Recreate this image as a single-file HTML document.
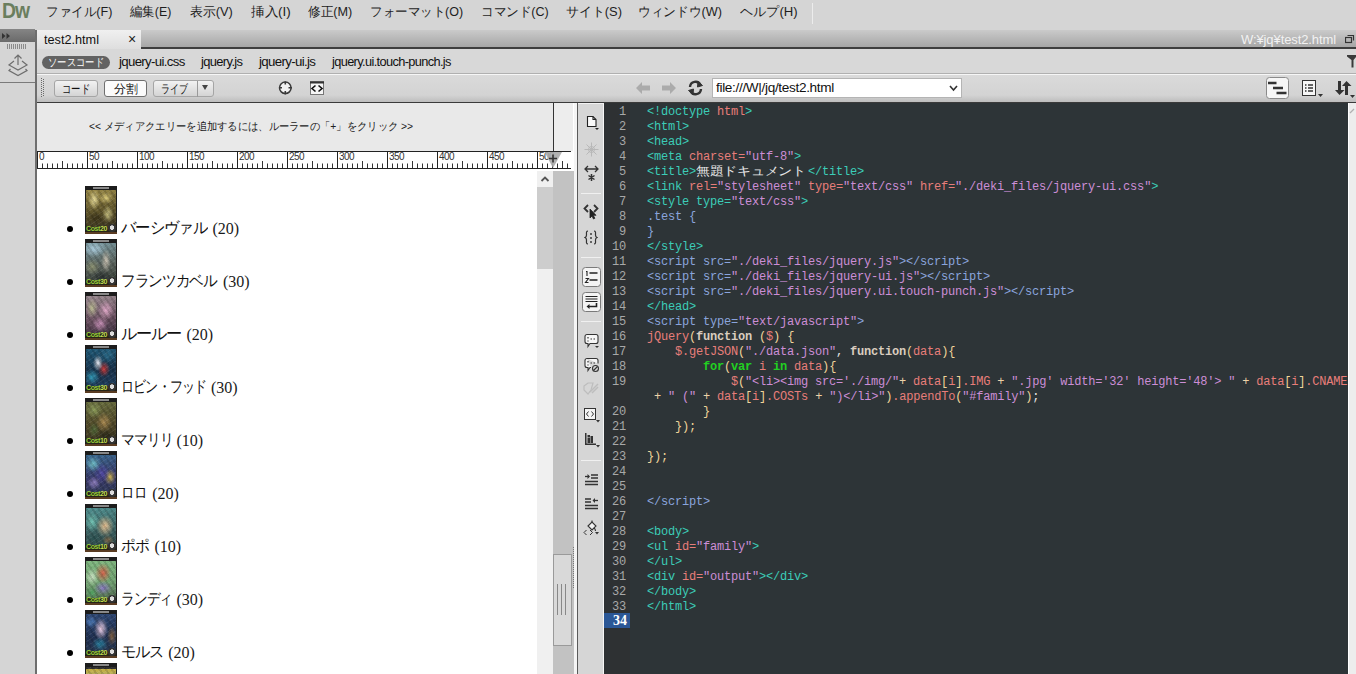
<!DOCTYPE html>
<html><head><meta charset="utf-8">
<style>
*{margin:0;padding:0;box-sizing:border-box}
html,body{width:1356px;height:674px;overflow:hidden;background:#d6d6d6;font-family:"Liberation Sans",sans-serif;position:relative}
.a{position:absolute}
#menu{left:0;top:0;width:1356px;height:30px;background:#d5d5d5}
#menu .m{position:absolute;top:3px;font-size:13px;color:#1e1e1e;white-space:nowrap}
#logo{left:2px;top:-2px;font-size:22px;font-weight:bold;color:#6a7e5e;letter-spacing:-1px;transform:scaleX(0.88);transform-origin:0 0}
#msep{left:812px;top:3px;width:1px;height:21px;background:#bdbdbd;border-right:1px solid #ececec}
#lp{left:0;top:30px;width:37px;height:645px;background:#d5d5d5;border-right:2px solid #6e6e6e}
#lptop{left:0;top:29px;width:35px;height:13px;background:linear-gradient(#858585,#6a6a6a)}
#lpsep{left:0;top:82px;width:35px;height:1px;background:#7a7a7a}
#tabbar{left:37px;top:30px;width:1319px;height:19px;background:linear-gradient(#cacaca,#a6a6a6);border-bottom:2px solid #3e3e3e}
#tab{left:37px;top:30px;width:104px;height:19px;background:linear-gradient(#f0f0f0,#dedede);font-size:12px;color:#111;padding:3px 0 0 7px}
#tabx{left:128px;top:31px;font-size:14px;color:#222}
#path{left:1241px;top:33px;font-size:12px;color:#f2f2f2;letter-spacing:-0.1px}
#rel{left:37px;top:49px;width:1319px;height:26px;background:#d8d8d8;border-bottom:1px solid #f6f6f6;box-shadow:inset 0 -1px 0 #b0b0b0}
#rel .r{position:absolute;top:6px;font-size:12px;color:#111;white-space:nowrap;letter-spacing:-0.6px}
#pill{white-space:nowrap;overflow:hidden;left:42px;top:56px;width:68px;height:13px;border-radius:7px;background:#626262;color:#fff;font-size:11px;text-align:left;padding-left:6px;line-height:13px}
#tool{left:37px;top:75px;width:1319px;height:28px;background:linear-gradient(#dadada,#d3d3d3 75%,#bdbdbd);border-bottom:1px solid #3a3a3a}
.btn{white-space:nowrap;overflow:hidden;position:absolute;top:80px;height:17px;border:1px solid #a5a5a5;border-radius:3px;background:linear-gradient(#f2f2f2,#d4d4d4);font-size:12px;color:#111;text-align:center;line-height:16px}
#addr{left:712px;top:78px;width:250px;height:20px;background:#fff;border:1px solid #b4b4b4;font-size:12px;color:#111;padding:2px 0 0 3px;letter-spacing:-0.3px}
#design{left:37px;top:103px;width:540px;height:571px;background:#fff}
#mq{left:37px;top:103px;width:517px;height:48px;background:#e9e9e9;border-right:1px solid #333;font-size:11px;color:#222;padding:16px 0 0 52px}
#vstrip{left:554px;top:103px;width:19px;height:48px;background:#ededed}
#sbtrack{left:537px;top:171px;width:16px;height:503px;background:#f0f0f0}
#sbup{left:537px;top:171px;width:16px;height:16px;background:#ececec;color:#444;font-size:11px;text-align:center;line-height:18px}
#sbthumb{left:537px;top:187px;width:16px;height:82px;background:#cdcdcd}
#split{left:553px;top:171px;width:21px;height:503px;background:#c2c2c2}
#splith{left:553px;top:554px;width:19px;height:92px;background:#d9d9d9;border:1px solid #9a9a9a}
#splitl{left:557px;top:584px;width:9px;height:31px;border-left:1px solid #888;border-right:1px solid #888}
#splitl:after{content:"";position:absolute;left:3px;top:0;width:1px;height:31px;background:#888}
#wline{left:574px;top:103px;width:3px;height:571px;background:#f4f4f4}
#dline{left:577px;top:103px;width:1px;height:571px;background:#5a5a5a}
#sidetb{left:578px;top:103px;width:26px;height:571px;background:#d6d6d6;border-top:1px solid #f2f2f2;border-right:1px solid #f6f6f6}
.ssep{position:absolute;left:581px;width:20px;height:1px;background:#b9b9b9;border-bottom:1px solid #f0f0f0}
#gutter{left:604px;top:103px;width:26px;height:571px;background:#2e3133}
#code{left:630px;top:103px;width:718px;height:571px;background:#2d3437}
#redge{left:1348px;top:103px;width:8px;height:571px;background:#ededed}
#gut{left:604px;top:105px;width:22px;text-align:right;font-family:"Liberation Mono",monospace;font-size:12px;color:#a8a8a8;line-height:15px;white-space:pre;letter-spacing:-0.2px}
#ln34{left:604px;top:613px;width:26px;height:15px;background:#2b5796;color:#fff;font-weight:bold;font-family:"Liberation Serif",serif;font-size:14px;text-align:right;padding-right:3px;line-height:15px}
#src{left:647px;top:105px;font-family:"Liberation Mono",monospace;font-size:12px;line-height:15px;white-space:pre;letter-spacing:-0.2px;color:#ccc}
.t{color:#3ccdb8}.at{color:#e87e7a}.v{color:#cc8ed6}.s{color:#8aa4dc}.k{color:#22d022;font-weight:bold}.p{color:#f0d49a}.fn{color:#dacdbf;font-weight:bold}.w{color:#e6e6e6}.op{color:#ecd2a8}.ttl{display:inline-block;width:112px;vertical-align:top;height:15px;overflow:visible}
.card{left:85px;width:32px;height:48px;background:#5a3c22;overflow:hidden}
.card:before{content:"";position:absolute;left:0;top:0;width:32px;height:46px;background:#1c1c1c}
.card .art{position:absolute;left:1px;top:4px;width:30px;height:37px}
.card .art:after{content:"";position:absolute;left:0;top:0;width:30px;height:37px;background:repeating-linear-gradient(55deg,rgba(0,0,0,.13) 0 2px,transparent 2px 5px),repeating-linear-gradient(-35deg,rgba(255,255,255,.07) 0 1px,transparent 1px 4px)}
.card .ctop{position:absolute;left:8px;top:1px;width:16px;height:2px;background:#888}
.card .cbot{position:absolute;left:1px;top:41px;width:30px;height:5px;background:#262418}
.card .cbot span{position:absolute;left:0px;top:-2px;font-size:7px;color:#9acd3c;font-weight:bold;letter-spacing:-0.4px;line-height:8px}
.card .cbot b{position:absolute;left:14px;top:-2px;font-size:7px;color:#c0de50;letter-spacing:-0.3px;line-height:8px}
.card .cbot i{position:absolute;right:0px;top:-3px;width:8px;height:8px;border-radius:4px;background:radial-gradient(circle at 50% 45%,#ddd 0 2px,#333 2.5px)}
.bul{left:67px;width:6px;height:6px;border-radius:50%;background:#000}
.lt{font-family:"Liberation Serif",serif;font-size:16px;color:#1a1a1a;white-space:nowrap;line-height:18px}
.jn{left:121px;font-family:"Liberation Sans",sans-serif;font-size:16px;line-height:18px;color:#111;white-space:nowrap;letter-spacing:-1px}
.ico{position:absolute}
</style></head><body>
<div id="menu" class="a">
<div id="logo" class="a">Dw</div>
<span class="m fit" style="left:46px;--w:66.4">ファイル(F)</span>
<span class="m fit" style="left:130px;--w:41.3">編集(E)</span>
<span class="m fit" style="left:190px;--w:42.8">表示(V)</span>
<span class="m fit" style="left:251px;--w:39.8">挿入(I)</span>
<span class="m fit" style="left:308px;--w:44.3">修正(M)</span>
<span class="m fit" style="left:370px;--w:93.2">フォーマット(O)</span>
<span class="m fit" style="left:481px;--w:67.8">コマンド(C)</span>
<span class="m fit" style="left:566px;--w:56">サイト(S)</span>
<span class="m fit" style="left:638px;--w:84.1">ウィンドウ(W)</span>
<span class="m fit" style="left:740px;--w:57.6">ヘルプ(H)</span>
<div id="msep" class="a"></div>
</div>
<div id="lp" class="a"></div>
<div id="lptop" class="a"></div>
<svg class="a" style="left:2px;top:33px" width="9" height="6"><path d="M0 0L3.5 3L0 6ZM4.5 0L8 3L4.5 6Z" fill="#333"/></svg>
<svg class="a" style="left:7px;top:44px" width="20" height="6"><path d="M0.5 0v5M2.5 0v5M4.5 0v5M6.5 0v5M8.5 0v5M10.5 0v5M12.5 0v5M14.5 0v5M16.5 0v5M18.5 0v5" stroke="#8a8a8a"/></svg>
<svg class="a" style="left:7px;top:53px" width="22" height="25" fill="none" stroke="#6e6e6e" stroke-width="1.2"><path d="M11 2v10M7.5 5.5L11 2l3.5 3.5"/><path d="M7 8L2 12l9 5 9-5-5-4"/><path d="M3.5 16L2 17.5l9 5 9-5-1.5-1.5"/></svg>
<div id="lpsep" class="a"></div>
<div id="tabbar" class="a"></div>
<div id="tab" class="a"><span class="fit" style="display:inline-block;--w:55">test2.html</span></div>
<div id="tabx" class="a">×</div>
<div id="path" class="a fit" style="--w:95">W:¥jq¥test2.html</div>
<svg class="a" style="left:1345px;top:34px" width="10" height="10" fill="none" stroke="#333" stroke-width="1.2"><rect x="0.5" y="3.5" width="6" height="5"/><path d="M2.5 1.5h6v5"/></svg>
<div id="rel" class="a">
<span class="r fit" style="left:82px;--w:65.6">jquery-ui.css</span>
<span class="r fit" style="left:164px;--w:41.4">jquery.js</span>
<span class="r fit" style="left:222px;--w:56.2">jquery-ui.js</span>
<span class="r fit" style="left:295px;--w:118.8">jquery.ui.touch-punch.js</span>
</div>
<div id="pill" class="a"><span class="fit" style="display:inline-block;--w:56">ソースコード</span></div>
<svg class="a" style="left:1347px;top:55px" width="9" height="13"><path d="M0 0h9v2L6.5 5V12.5H4.5V5L0 1.5Z" fill="#3a3a3a"/></svg>
<div id="tool" class="a"></div>
<svg class="a" style="left:40px;top:78px" width="5" height="19"><path d="M1.5 0v19M3.5 1v18" stroke="#6a6a6a" stroke-dasharray="1 1"/></svg>
<div class="btn" style="left:54px;width:44px;text-align:left;padding-left:7px"><span class="fit" style="display:inline-block;--w:28">コード</span></div>
<div class="btn" style="left:104px;width:43px;background:#fbfbfb;border-color:#6f6f6f">分割</div>
<div class="btn" style="left:153px;width:61px;text-align:left;padding-left:7px"><span class="fit" style="display:inline-block;--w:27">ライブ</span></div>
<div class="a" style="left:197px;top:81px;width:1px;height:16px;background:#9a9a9a"></div>
<svg class="a" style="left:202px;top:85px" width="7" height="5"><path d="M0 0h6L3 5Z" fill="#444"/></svg>
<svg class="a" style="left:278px;top:81px" width="15" height="14"><circle cx="7.3" cy="6.8" r="5.8" fill="#f2f2f2" stroke="#3a3a3a" stroke-width="1.5"/><path d="M7.3 0.5v3M7.3 10v3.5M1 6.8h3M10.5 6.8h3.5" stroke="#3a3a3a" stroke-width="1.6"/></svg>
<svg class="a" style="left:310px;top:81px" width="14" height="14"><rect x="0.5" y="0.5" width="13" height="13" fill="#f6f6f6" stroke="#777"/><path d="M0 1.5h14" stroke="#333" stroke-width="2"/><path d="M5.5 4.5L2 7.5 5.5 10.5M8.5 4.5l3.5 3-3.5 3" stroke="#111" fill="none" stroke-width="1.6"/></svg>
<svg class="a" style="left:636px;top:82px" width="14" height="12"><path d="M0 6L6 0v3.5h8v5H6V12Z" fill="#ababab"/></svg>
<svg class="a" style="left:662px;top:82px" width="14" height="12"><path d="M14 6L8 0v3.5H0v5h8V12Z" fill="#ababab"/></svg>
<svg class="a" style="left:687px;top:80px" width="17" height="16" fill="none" stroke="#333" stroke-width="2.4"><path d="M3 7A5.5 5.5 0 0 1 13.5 5"/><path d="M14 9A5.5 5.5 0 0 1 3.5 11"/><path d="M11 1.5L15.5 5.5 10.5 7Z" fill="#333" stroke-width="1"/><path d="M6 14.5L1.5 10.5 6.5 9Z" fill="#333" stroke-width="1"/></svg>
<div id="addr" class="a"><span class="fit" style="display:inline-block;--w:118">file:///W|/jq/test2.html</span></div>
<svg class="a" style="left:949px;top:85px" width="9" height="7"><path d="M1 1L4.5 5 8 1" stroke="#333" stroke-width="1.6" fill="none"/></svg>
<svg class="a" style="left:1266px;top:77px" width="23" height="22"><rect x="0.5" y="0.5" width="22" height="21" rx="3" fill="#f6f6f6" stroke="#8a8a8a"/><path d="M2 6h8.5M7 11h10M10.5 16h10" stroke="#333" stroke-width="2.6"/></svg>
<svg class="a" style="left:1302px;top:80px" width="22" height="17"><rect x="0.5" y="0.5" width="13" height="15" fill="#f6f6f6" stroke="#333"/><path d="M3 5h1.5M6 5h5M3 8h1.5M6 8h5M3 11h1.5M6 11h5" stroke="#333" stroke-width="1.6"/><path d="M16 14h5l-2.5 3Z" fill="#333"/></svg>
<svg class="a" style="left:1334px;top:80px" width="22" height="18" fill="#333"><path d="M4 1h3v9h3.5L5.5 15 1 10h3Z"/><path d="M11 15h3V6h3.5L12.5 1 8 6h3Z"/><path d="M16 15h5l-2.5 3Z"/></svg>
<div id="design" class="a"></div>
<div id="mq" class="a"><span class="fit" style="display:inline-block;--w:324">&lt;&lt; メディアクエリーを追加するには、ルーラーの「+」をクリック &gt;&gt;</span></div>
<div id="vstrip" class="a"></div>
<svg class="a" style="left:0;top:151px" width="575" height="18"><line x1="37.5" y1="0" x2="37.5" y2="17" stroke="#222" stroke-width="1"/><text x="39.0" y="9" font-size="10" fill="#333" font-family="Liberation Sans" letter-spacing="-0.5">0</text><line x1="42.5" y1="12.5" x2="42.5" y2="17" stroke="#333" stroke-width="1"/><line x1="47.5" y1="12.5" x2="47.5" y2="17" stroke="#333" stroke-width="1"/><line x1="52.5" y1="12.5" x2="52.5" y2="17" stroke="#333" stroke-width="1"/><line x1="57.5" y1="12.5" x2="57.5" y2="17" stroke="#333" stroke-width="1"/><line x1="62.5" y1="10" x2="62.5" y2="17" stroke="#333" stroke-width="1"/><line x1="67.5" y1="12.5" x2="67.5" y2="17" stroke="#333" stroke-width="1"/><line x1="72.5" y1="12.5" x2="72.5" y2="17" stroke="#333" stroke-width="1"/><line x1="77.5" y1="12.5" x2="77.5" y2="17" stroke="#333" stroke-width="1"/><line x1="82.5" y1="12.5" x2="82.5" y2="17" stroke="#333" stroke-width="1"/><line x1="87.5" y1="0" x2="87.5" y2="17" stroke="#222" stroke-width="1"/><text x="89.0" y="9" font-size="10" fill="#333" font-family="Liberation Sans" letter-spacing="-0.5">50</text><line x1="92.5" y1="12.5" x2="92.5" y2="17" stroke="#333" stroke-width="1"/><line x1="97.5" y1="12.5" x2="97.5" y2="17" stroke="#333" stroke-width="1"/><line x1="102.5" y1="12.5" x2="102.5" y2="17" stroke="#333" stroke-width="1"/><line x1="107.5" y1="12.5" x2="107.5" y2="17" stroke="#333" stroke-width="1"/><line x1="112.5" y1="10" x2="112.5" y2="17" stroke="#333" stroke-width="1"/><line x1="117.5" y1="12.5" x2="117.5" y2="17" stroke="#333" stroke-width="1"/><line x1="122.5" y1="12.5" x2="122.5" y2="17" stroke="#333" stroke-width="1"/><line x1="127.5" y1="12.5" x2="127.5" y2="17" stroke="#333" stroke-width="1"/><line x1="132.5" y1="12.5" x2="132.5" y2="17" stroke="#333" stroke-width="1"/><line x1="137.5" y1="0" x2="137.5" y2="17" stroke="#222" stroke-width="1"/><text x="139.0" y="9" font-size="10" fill="#333" font-family="Liberation Sans" letter-spacing="-0.5">100</text><line x1="142.5" y1="12.5" x2="142.5" y2="17" stroke="#333" stroke-width="1"/><line x1="147.5" y1="12.5" x2="147.5" y2="17" stroke="#333" stroke-width="1"/><line x1="152.5" y1="12.5" x2="152.5" y2="17" stroke="#333" stroke-width="1"/><line x1="157.5" y1="12.5" x2="157.5" y2="17" stroke="#333" stroke-width="1"/><line x1="162.5" y1="10" x2="162.5" y2="17" stroke="#333" stroke-width="1"/><line x1="167.5" y1="12.5" x2="167.5" y2="17" stroke="#333" stroke-width="1"/><line x1="172.5" y1="12.5" x2="172.5" y2="17" stroke="#333" stroke-width="1"/><line x1="177.5" y1="12.5" x2="177.5" y2="17" stroke="#333" stroke-width="1"/><line x1="182.5" y1="12.5" x2="182.5" y2="17" stroke="#333" stroke-width="1"/><line x1="187.5" y1="0" x2="187.5" y2="17" stroke="#222" stroke-width="1"/><text x="189.0" y="9" font-size="10" fill="#333" font-family="Liberation Sans" letter-spacing="-0.5">150</text><line x1="192.5" y1="12.5" x2="192.5" y2="17" stroke="#333" stroke-width="1"/><line x1="197.5" y1="12.5" x2="197.5" y2="17" stroke="#333" stroke-width="1"/><line x1="202.5" y1="12.5" x2="202.5" y2="17" stroke="#333" stroke-width="1"/><line x1="207.5" y1="12.5" x2="207.5" y2="17" stroke="#333" stroke-width="1"/><line x1="212.5" y1="10" x2="212.5" y2="17" stroke="#333" stroke-width="1"/><line x1="217.5" y1="12.5" x2="217.5" y2="17" stroke="#333" stroke-width="1"/><line x1="222.5" y1="12.5" x2="222.5" y2="17" stroke="#333" stroke-width="1"/><line x1="227.5" y1="12.5" x2="227.5" y2="17" stroke="#333" stroke-width="1"/><line x1="232.5" y1="12.5" x2="232.5" y2="17" stroke="#333" stroke-width="1"/><line x1="237.5" y1="0" x2="237.5" y2="17" stroke="#222" stroke-width="1"/><text x="239.0" y="9" font-size="10" fill="#333" font-family="Liberation Sans" letter-spacing="-0.5">200</text><line x1="242.5" y1="12.5" x2="242.5" y2="17" stroke="#333" stroke-width="1"/><line x1="247.5" y1="12.5" x2="247.5" y2="17" stroke="#333" stroke-width="1"/><line x1="252.5" y1="12.5" x2="252.5" y2="17" stroke="#333" stroke-width="1"/><line x1="257.5" y1="12.5" x2="257.5" y2="17" stroke="#333" stroke-width="1"/><line x1="262.5" y1="10" x2="262.5" y2="17" stroke="#333" stroke-width="1"/><line x1="267.5" y1="12.5" x2="267.5" y2="17" stroke="#333" stroke-width="1"/><line x1="272.5" y1="12.5" x2="272.5" y2="17" stroke="#333" stroke-width="1"/><line x1="277.5" y1="12.5" x2="277.5" y2="17" stroke="#333" stroke-width="1"/><line x1="282.5" y1="12.5" x2="282.5" y2="17" stroke="#333" stroke-width="1"/><line x1="287.5" y1="0" x2="287.5" y2="17" stroke="#222" stroke-width="1"/><text x="289.0" y="9" font-size="10" fill="#333" font-family="Liberation Sans" letter-spacing="-0.5">250</text><line x1="292.5" y1="12.5" x2="292.5" y2="17" stroke="#333" stroke-width="1"/><line x1="297.5" y1="12.5" x2="297.5" y2="17" stroke="#333" stroke-width="1"/><line x1="302.5" y1="12.5" x2="302.5" y2="17" stroke="#333" stroke-width="1"/><line x1="307.5" y1="12.5" x2="307.5" y2="17" stroke="#333" stroke-width="1"/><line x1="312.5" y1="10" x2="312.5" y2="17" stroke="#333" stroke-width="1"/><line x1="317.5" y1="12.5" x2="317.5" y2="17" stroke="#333" stroke-width="1"/><line x1="322.5" y1="12.5" x2="322.5" y2="17" stroke="#333" stroke-width="1"/><line x1="327.5" y1="12.5" x2="327.5" y2="17" stroke="#333" stroke-width="1"/><line x1="332.5" y1="12.5" x2="332.5" y2="17" stroke="#333" stroke-width="1"/><line x1="337.5" y1="0" x2="337.5" y2="17" stroke="#222" stroke-width="1"/><text x="339.0" y="9" font-size="10" fill="#333" font-family="Liberation Sans" letter-spacing="-0.5">300</text><line x1="342.5" y1="12.5" x2="342.5" y2="17" stroke="#333" stroke-width="1"/><line x1="347.5" y1="12.5" x2="347.5" y2="17" stroke="#333" stroke-width="1"/><line x1="352.5" y1="12.5" x2="352.5" y2="17" stroke="#333" stroke-width="1"/><line x1="357.5" y1="12.5" x2="357.5" y2="17" stroke="#333" stroke-width="1"/><line x1="362.5" y1="10" x2="362.5" y2="17" stroke="#333" stroke-width="1"/><line x1="367.5" y1="12.5" x2="367.5" y2="17" stroke="#333" stroke-width="1"/><line x1="372.5" y1="12.5" x2="372.5" y2="17" stroke="#333" stroke-width="1"/><line x1="377.5" y1="12.5" x2="377.5" y2="17" stroke="#333" stroke-width="1"/><line x1="382.5" y1="12.5" x2="382.5" y2="17" stroke="#333" stroke-width="1"/><line x1="387.5" y1="0" x2="387.5" y2="17" stroke="#222" stroke-width="1"/><text x="389.0" y="9" font-size="10" fill="#333" font-family="Liberation Sans" letter-spacing="-0.5">350</text><line x1="392.5" y1="12.5" x2="392.5" y2="17" stroke="#333" stroke-width="1"/><line x1="397.5" y1="12.5" x2="397.5" y2="17" stroke="#333" stroke-width="1"/><line x1="402.5" y1="12.5" x2="402.5" y2="17" stroke="#333" stroke-width="1"/><line x1="407.5" y1="12.5" x2="407.5" y2="17" stroke="#333" stroke-width="1"/><line x1="412.5" y1="10" x2="412.5" y2="17" stroke="#333" stroke-width="1"/><line x1="417.5" y1="12.5" x2="417.5" y2="17" stroke="#333" stroke-width="1"/><line x1="422.5" y1="12.5" x2="422.5" y2="17" stroke="#333" stroke-width="1"/><line x1="427.5" y1="12.5" x2="427.5" y2="17" stroke="#333" stroke-width="1"/><line x1="432.5" y1="12.5" x2="432.5" y2="17" stroke="#333" stroke-width="1"/><line x1="437.5" y1="0" x2="437.5" y2="17" stroke="#222" stroke-width="1"/><text x="439.0" y="9" font-size="10" fill="#333" font-family="Liberation Sans" letter-spacing="-0.5">400</text><line x1="442.5" y1="12.5" x2="442.5" y2="17" stroke="#333" stroke-width="1"/><line x1="447.5" y1="12.5" x2="447.5" y2="17" stroke="#333" stroke-width="1"/><line x1="452.5" y1="12.5" x2="452.5" y2="17" stroke="#333" stroke-width="1"/><line x1="457.5" y1="12.5" x2="457.5" y2="17" stroke="#333" stroke-width="1"/><line x1="462.5" y1="10" x2="462.5" y2="17" stroke="#333" stroke-width="1"/><line x1="467.5" y1="12.5" x2="467.5" y2="17" stroke="#333" stroke-width="1"/><line x1="472.5" y1="12.5" x2="472.5" y2="17" stroke="#333" stroke-width="1"/><line x1="477.5" y1="12.5" x2="477.5" y2="17" stroke="#333" stroke-width="1"/><line x1="482.5" y1="12.5" x2="482.5" y2="17" stroke="#333" stroke-width="1"/><line x1="487.5" y1="0" x2="487.5" y2="17" stroke="#222" stroke-width="1"/><text x="489.0" y="9" font-size="10" fill="#333" font-family="Liberation Sans" letter-spacing="-0.5">450</text><line x1="492.5" y1="12.5" x2="492.5" y2="17" stroke="#333" stroke-width="1"/><line x1="497.5" y1="12.5" x2="497.5" y2="17" stroke="#333" stroke-width="1"/><line x1="502.5" y1="12.5" x2="502.5" y2="17" stroke="#333" stroke-width="1"/><line x1="507.5" y1="12.5" x2="507.5" y2="17" stroke="#333" stroke-width="1"/><line x1="512.5" y1="10" x2="512.5" y2="17" stroke="#333" stroke-width="1"/><line x1="517.5" y1="12.5" x2="517.5" y2="17" stroke="#333" stroke-width="1"/><line x1="522.5" y1="12.5" x2="522.5" y2="17" stroke="#333" stroke-width="1"/><line x1="527.5" y1="12.5" x2="527.5" y2="17" stroke="#333" stroke-width="1"/><line x1="532.5" y1="12.5" x2="532.5" y2="17" stroke="#333" stroke-width="1"/><line x1="537.5" y1="0" x2="537.5" y2="17" stroke="#222" stroke-width="1"/><text x="539.0" y="9" font-size="10" fill="#333" font-family="Liberation Sans" letter-spacing="-0.5">500</text><line x1="542.5" y1="12.5" x2="542.5" y2="17" stroke="#333" stroke-width="1"/><line x1="547.5" y1="12.5" x2="547.5" y2="17" stroke="#333" stroke-width="1"/><line x1="552.5" y1="12.5" x2="552.5" y2="17" stroke="#333" stroke-width="1"/><line x1="557.5" y1="12.5" x2="557.5" y2="17" stroke="#333" stroke-width="1"/><line x1="562.5" y1="10" x2="562.5" y2="17" stroke="#333" stroke-width="1"/><line x1="567.5" y1="12.5" x2="567.5" y2="17" stroke="#333" stroke-width="1"/><line x1="37" y1="0.5" x2="571" y2="0.5" stroke="#222"/><line x1="37" y1="17.5" x2="571" y2="17.5" stroke="#222"/><path d="M544.5 1 L562 1 L553 17 Z" fill="#a9a9a9" opacity="0.9"/><path d="M549 7.5h8M553 3.5v8" stroke="#333" stroke-width="1.6"/></svg>
<div id="sbtrack" class="a"></div>
<div id="sbthumb" class="a"></div>
<svg class="a" style="left:537px;top:171px" width="16" height="16"><path d="M4.5 10L8 6.5 11.5 10" stroke="#555" stroke-width="1.8" fill="none"/></svg>
<div id="split" class="a"></div>
<div id="splith" class="a"></div>
<div id="splitl" class="a"></div>
<div id="wline" class="a"></div>
<div id="dline" class="a"></div>
<svg class="a" style="left:573px;top:547px" width="2" height="42"><path d="M0.5 0v42" stroke="#777" stroke-dasharray="1 1"/></svg>

<div class="card a" style="top:186px"><div class="art" style="background:radial-gradient(ellipse 6px 10px at 8px 10px,#e8dc98,transparent),radial-gradient(ellipse 7px 6px at 20px 8px,#d8c878,transparent),radial-gradient(ellipse 6px 9px at 22px 24px,#c8c080,transparent),radial-gradient(ellipse 8px 6px at 10px 28px,#3a3218,transparent),linear-gradient(170deg,#9a8a48,#5a5028 60%,#3a3420)"></div><div class="ctop"></div><div class="cbot"><span>Cost</span><b>20</b><i></i></div></div>
<div class="bul a" style="top:226px"></div>
<div class="jn a fit" style="top:219px;--w:86">バーシヴァル</div>
<div class="lt a" style="top:220px;left:212.5px">(20)</div>
<div class="card a" style="top:239px"><div class="art" style="background:radial-gradient(ellipse 12px 8px at 8px 6px,#a8c8d8,transparent),radial-gradient(ellipse 5px 12px at 20px 18px,#c8c0b0,transparent),radial-gradient(ellipse 8px 8px at 6px 24px,#8a9070,transparent),radial-gradient(ellipse 10px 6px at 16px 34px,#2a3030,transparent),linear-gradient(170deg,#7898a0,#58605a 60%,#384038)"></div><div class="ctop"></div><div class="cbot"><span>Cost</span><b>30</b><i></i></div></div>
<div class="bul a" style="top:279px"></div>
<div class="jn a fit" style="top:272px;--w:95.5">フランツカベル</div>
<div class="lt a" style="top:273px;left:223px">(30)</div>
<div class="card a" style="top:292px"><div class="art" style="background:radial-gradient(ellipse 6px 10px at 6px 12px,#b8b890,transparent),radial-gradient(ellipse 8px 10px at 20px 14px,#e0a8c8,transparent),radial-gradient(ellipse 8px 8px at 14px 28px,#c890b8,transparent),radial-gradient(ellipse 6px 6px at 22px 32px,#504050,transparent),linear-gradient(170deg,#9a8a90,#6a5060 60%,#403040)"></div><div class="ctop"></div><div class="cbot"><span>Cost</span><b>20</b><i></i></div></div>
<div class="bul a" style="top:332px"></div>
<div class="jn a fit" style="top:325px;--w:60.5">ルールー</div>
<div class="lt a" style="top:326px;left:186.5px">(20)</div>
<div class="card a" style="top:345px"><div class="art" style="background:radial-gradient(ellipse 5px 8px at 12px 14px,#e8e8f0,transparent),radial-gradient(ellipse 6px 8px at 18px 20px,#c83838,transparent),radial-gradient(ellipse 8px 8px at 6px 28px,#309ab8,transparent),radial-gradient(ellipse 8px 8px at 22px 6px,#2a6a88,transparent),linear-gradient(170deg,#205a78,#183048 60%,#204060)"></div><div class="ctop"></div><div class="cbot"><span>Cost</span><b>30</b><i></i></div></div>
<div class="bul a" style="top:385px"></div>
<div class="jn a fit" style="top:378px;--w:85.5">ロビン・フッド</div>
<div class="lt a" style="top:379px;left:211px">(30)</div>
<div class="card a" style="top:398px"><div class="art" style="background:radial-gradient(ellipse 8px 8px at 8px 8px,#8a9a58,transparent),radial-gradient(ellipse 8px 10px at 18px 20px,#a88850,transparent),radial-gradient(ellipse 6px 8px at 8px 28px,#506838,transparent),radial-gradient(ellipse 8px 6px at 20px 34px,#2a2818,transparent),linear-gradient(170deg,#6a7040,#504828 60%,#383420)"></div><div class="ctop"></div><div class="cbot"><span>Cost</span><b>10</b><i></i></div></div>
<div class="bul a" style="top:438px"></div>
<div class="jn a fit" style="top:431px;--w:51.5">ママリリ</div>
<div class="lt a" style="top:432px;left:176.5px">(10)</div>
<div class="card a" style="top:451px"><div class="art" style="background:radial-gradient(ellipse 8px 8px at 7px 9px,#70c0c8,transparent),radial-gradient(ellipse 8px 10px at 16px 18px,#5048a0,transparent),radial-gradient(ellipse 6px 8px at 24px 22px,#c8b050,transparent),radial-gradient(ellipse 7px 7px at 8px 28px,#9080c0,transparent),linear-gradient(170deg,#3a6a90,#383868 60%,#303a58)"></div><div class="ctop"></div><div class="cbot"><span>Cost</span><b>20</b><i></i></div></div>
<div class="bul a" style="top:491px"></div>
<div class="jn a fit" style="top:484px;--w:25">ロロ</div>
<div class="lt a" style="top:485px;left:152.2px">(20)</div>
<div class="card a" style="top:504px"><div class="art" style="background:radial-gradient(ellipse 9px 11px at 19px 18px,#e8c090,transparent),radial-gradient(ellipse 7px 10px at 6px 14px,#70c0b0,transparent),radial-gradient(ellipse 6px 6px at 8px 30px,#2a5050,transparent),radial-gradient(ellipse 6px 5px at 22px 32px,#806848,transparent),linear-gradient(170deg,#509090,#3a6060 60%,#304848)"></div><div class="ctop"></div><div class="cbot"><span>Cost</span><b>10</b><i></i></div></div>
<div class="bul a" style="top:544px"></div>
<div class="jn a fit" style="top:537px;--w:27.7">ポポ</div>
<div class="lt a" style="top:538px;left:154.4px">(10)</div>
<div class="card a" style="top:557px"><div class="art" style="background:radial-gradient(ellipse 8px 10px at 17px 12px,#d06048,transparent),radial-gradient(ellipse 7px 9px at 6px 16px,#c8e0c0,transparent),radial-gradient(ellipse 9px 7px at 17px 27px,#8878c0,transparent),radial-gradient(ellipse 6px 6px at 6px 32px,#50a060,transparent),linear-gradient(170deg,#80b880,#70a070 60%,#506850)"></div><div class="ctop"></div><div class="cbot"><span>Cost</span><b>30</b><i></i></div></div>
<div class="bul a" style="top:597px"></div>
<div class="jn a fit" style="top:590px;--w:51">ランディ</div>
<div class="lt a" style="top:591px;left:176.5px">(30)</div>
<div class="card a" style="top:610px"><div class="art" style="background:radial-gradient(ellipse 7px 11px at 15px 15px,#f0d0e8,transparent),radial-gradient(ellipse 8px 7px at 14px 30px,#2880a0,transparent),radial-gradient(ellipse 5px 10px at 26px 22px,#806040,transparent),radial-gradient(ellipse 6px 6px at 5px 8px,#5080c0,transparent),linear-gradient(170deg,#304a78,#203050 60%,#283850)"></div><div class="ctop"></div><div class="cbot"><span>Cost</span><b>20</b><i></i></div></div>
<div class="bul a" style="top:650px"></div>
<div class="jn a fit" style="top:643px;--w:42.7">モルス</div>
<div class="lt a" style="top:644px;left:168.2px">(20)</div>
<div class="card a" style="top:663px"><div class="art" style="background:linear-gradient(180deg,#303030 0 2px,#c8b040 2px,#60a0c8 80%)"></div><div class="ctop"></div><div class="cbot"><span>Cost</span><b></b><i></i></div></div>
<div id="sidetb" class="a"></div>

<svg class="a" style="left:586px;top:115px" width="14" height="15" fill="none" stroke="#222" stroke-width="1.1"><path d="M1.5 1.5h5.5l3 3v7h-8.5Z" fill="#fafafa"/><path d="M7 1.5v3h3"/><path d="M9 13h4l-2 2Z" fill="#222" stroke="none"/></svg>
<svg class="a" style="left:584px;top:142px" width="15" height="15" fill="none" stroke="#b8b8b8" stroke-width="1"><circle cx="7.5" cy="7.5" r="3"/><path d="M7.5 0.5v14M0.5 7.5h14M2.5 2.5l10 10M12.5 2.5l-10 10"/></svg>
<svg class="a" style="left:584px;top:165px" width="15" height="17" fill="none" stroke="#333" stroke-width="1.3"><path d="M1 4h13M4 1L1 4l3 3M11 1l3 3-3 3"/><path d="M7.5 9v7M4.5 10.5l6 4M10.5 10.5l-6 4" stroke-width="1.5"/></svg>
<div class="ssep" style="top:193px"></div>
<svg class="a" style="left:583px;top:203px" width="17" height="17" fill="none" stroke="#333" stroke-width="1.8"><path d="M5 2L1.5 5.5 5 9M11 2l3.5 3.5L11 9"/><path d="M7 6v9l2-2 1.5 3 1.3-.7-1.5-3h2.7Z" fill="#222" stroke="#222" stroke-width=".8"/></svg>
<svg class="a" style="left:584px;top:230px" width="14" height="15" fill="none" stroke="#333" stroke-width="1.2"><path d="M4 1C2 1 2.5 3 2.5 5S1 7.5 1 7.5 2.5 8 2.5 10 2 14 4 14M10 1c2 0 1.5 2 1.5 4s1.5 2.5 1.5 2.5-1.5.5-1.5 2.5.5 4-1.5 4"/><path d="M7 3v2M7 7v2M7 11v2" stroke-width="1.4"/></svg>
<div class="ssep" style="top:257px"></div>
<svg class="a" style="left:582px;top:267px" width="19" height="20"><rect x="0.5" y="0.5" width="18" height="19" rx="3" fill="#f4f4f4" stroke="#7a7a7a"/><path d="M5 4v5M4 4.5h1" stroke="#222" stroke-width="1.1" fill="none"/><path d="M7.5 6h8M7.5 13h8" stroke="#222" stroke-width="1.3"/><path d="M3.5 11.5h3l-3 4h3" stroke="#222" stroke-width="1.1" fill="none"/></svg>
<svg class="a" style="left:582px;top:292px" width="19" height="20"><rect x="0.5" y="0.5" width="18" height="19" rx="3" fill="#f4f4f4" stroke="#7a7a7a"/><path d="M3.5 4.5h12M3.5 7h12M3.5 9.5h12" stroke="#222" stroke-width="1.1"/><path d="M14.5 11v3.5h-8" stroke="#222" stroke-width="1.6" fill="none"/><path d="M4.5 14.5l3-2.5v5Z" fill="#222"/></svg>
<div class="ssep" style="top:321px"></div>
<svg class="a" style="left:584px;top:333px" width="16" height="16" fill="none" stroke="#333" stroke-width="1.1"><path d="M3 1.5h9a2 2 0 0 1 2 2v5a2 2 0 0 1-2 2H6l-2 3v-3H3a2 2 0 0 1-2-2v-5a2 2 0 0 1 2-2Z" fill="#f6f6f6"/><path d="M4 4v1.5M4 7.5v1M6.5 6h1.5M9.5 6h1.5" stroke-width="1.2"/><path d="M11 13h4l-2 2Z" fill="#333" stroke="none"/></svg>
<svg class="a" style="left:584px;top:357px" width="16" height="16" fill="none" stroke="#333" stroke-width="1.1"><path d="M3 1.5h9a2 2 0 0 1 2 2v3M7 10.5H6l-2 3v-3H3a2 2 0 0 1-2-2v-5a2 2 0 0 1 2-2" fill="#f6f6f6"/><path d="M4 4v1.5M4 7.5v1M6.5 6h1.5M9.5 6h1.5" stroke-width="1.2"/><circle cx="11.5" cy="11.5" r="3"/><path d="M9.5 13.5l4-4"/></svg>
<svg class="a" style="left:583px;top:382px" width="17" height="15" fill="none" stroke="#bdbdbd" stroke-width="1.2"><path d="M1 4l4-3h5l-2 7-3 4-4-4Z"/><path d="M7 10l8-8M9 11l6-6" stroke-width="1.5"/></svg>
<svg class="a" style="left:584px;top:408px" width="17" height="15"><rect x="0.5" y="0.5" width="11" height="11" fill="#f4f4f4" stroke="#333"/><path d="M4.5 3.5L2.5 6l2 2.5M7.5 3.5L9.5 6l-2 2.5" stroke="#333" fill="none" stroke-width="1"/><path d="M12 12h4l-2 2.5Z" fill="#333"/></svg>
<svg class="a" style="left:584px;top:433px" width="17" height="15" fill="#333"><path d="M1 0h1.5v10.5H12V12H1Z"/><rect x="3.5" y="5" width="2.5" height="5"/><rect x="6.5" y="3" width="2.5" height="7"/><rect x="3.5" y="2" width="2.5" height="2.5"/><path d="M12 12h4l-2 2.5Z"/></svg>
<div class="ssep" style="top:460px"></div>
<svg class="a" style="left:584px;top:473px" width="15" height="13"><path d="M7 2h7M7 5h7M1 8.5h13M1 11.5h13" stroke="#333" stroke-width="1.3"/><path d="M1 3.5h4" stroke="#333" stroke-width="1.3"/><path d="M6 3.5l-2.5-2.5v5Z" fill="#333"/></svg>
<svg class="a" style="left:584px;top:497px" width="15" height="13"><path d="M1 2h6M1 5h6M1 8.5h13M1 11.5h13" stroke="#333" stroke-width="1.3"/><path d="M10 3.5h4" stroke="#333" stroke-width="1.3"/><path d="M8.5 3.5l2.5-2.5v5Z" fill="#333"/></svg>
<svg class="a" style="left:583px;top:520px" width="17" height="16" fill="none" stroke="#333" stroke-width="1.1"><path d="M5 6l4-4 4 4-4 4Z" fill="#f2f2f2"/><path d="M9 2V0.5" /><path d="M11 8c1.5 1 1.5 3 1.5 3" stroke="#333"/><path d="M3.5 10L1 12.5 3.5 15M7 10l2.5 2.5L7 15" stroke-width="1"/><path d="M12 12h4l-2 2.5Z" fill="#333" stroke="none"/></svg>

<div id="gutter" class="a"></div>
<div id="code" class="a"></div>
<div id="redge" class="a"></div>
<svg class="a" style="left:1349px;top:106px" width="7" height="10"><path d="M1 7L5 3" stroke="#b0b0b0" stroke-width="1.3" fill="none"/></svg>
<div class="a" style="left:1348px;top:103px;width:1px;height:571px;background:#fff"></div>
<div id="gut" class="a">1
2
3
4
5
6
7
8
9
10
11
12
13
14
15
16
17
18
19

20
21
22
23
24
25
26
27
28
29
30
31
32
33
34</div>
<div id="ln34" class="a">34</div>
<div id="src" class="a"><span class="t">&lt;!doctype</span><span class="at"> html</span><span class="t">&gt;</span>
<span class="t">&lt;html&gt;</span>
<span class="t">&lt;head&gt;</span>
<span class="t">&lt;meta </span><span class="at">charset=</span><span class="v">"utf-8"</span><span class="t">&gt;</span>
<span class="t">&lt;title&gt;</span><span class="ttl"><span class="w fit" style="display:inline-block;--w:110">無題ドキュメント</span></span><span class="t">&lt;/title&gt;</span>
<span class="t">&lt;link </span><span class="at">rel=</span><span class="v">"stylesheet"</span><span class="at"> type=</span><span class="v">"text/css"</span><span class="at"> href=</span><span class="v">"./deki_files/jquery-ui.css"</span><span class="t">&gt;</span>
<span class="t">&lt;style type=</span><span class="v">"text/css"</span><span class="t">&gt;</span>
<span class="s">.test {</span>
<span class="s">}</span>
<span class="t">&lt;/style&gt;</span>
<span class="s">&lt;script src=</span><span class="v">"./deki_files/jquery.js"</span><span class="s">&gt;&lt;/script&gt;</span>
<span class="s">&lt;script src=</span><span class="v">"./deki_files/jquery-ui.js"</span><span class="s">&gt;&lt;/script&gt;</span>
<span class="s">&lt;script src=</span><span class="v">"./deki_files/jquery.ui.touch-punch.js"</span><span class="s">&gt;&lt;/script&gt;</span>
<span class="t">&lt;/head&gt;</span>
<span class="s">&lt;script type=</span><span class="v">"text/javascript"</span><span class="s">&gt;</span>
<span class="at">jQuery</span><span class="p">(</span><span class="fn">function</span><span class="w"> </span><span class="p">(</span><span class="at">$</span><span class="p">)</span><span class="w"> </span><span class="p">{</span>
<span class="w">    </span><span class="at">$.getJSON</span><span class="p">(</span><span class="v">"./data.json"</span><span class="w">, </span><span class="fn">function</span><span class="p">(</span><span class="at">data</span><span class="p">)</span><span class="p">{</span>
<span class="w">        </span><span class="k">for</span><span class="p">(</span><span class="k">var</span><span class="at"> i </span><span class="k">in</span><span class="at"> data</span><span class="p">)</span><span class="p">{</span>
<span class="w">            </span><span class="at">$</span><span class="p">(</span><span class="v">"&lt;li&gt;&lt;img src='./img/"</span><span class="op">+ </span><span class="at">data</span><span class="p">[</span><span class="at">i</span><span class="p">]</span><span class="at">.IMG</span><span class="op"> + </span><span class="v">".jpg' width='32' height='48'&gt; "</span><span class="op"> + </span><span class="at">data</span><span class="p">[</span><span class="at">i</span><span class="p">]</span><span class="at">.CNAME</span>
<span class="op"> + </span><span class="v">" ("</span><span class="op"> + </span><span class="at">data</span><span class="p">[</span><span class="at">i</span><span class="p">]</span><span class="at">.COSTs</span><span class="op"> + </span><span class="v">")&lt;/li&gt;"</span><span class="p">)</span><span class="at">.appendTo</span><span class="p">(</span><span class="v">"#family"</span><span class="p">)</span><span class="w">;</span>
<span class="w">        </span><span class="p">}</span>
<span class="w">    </span><span class="p">});</span>

<span class="p">});</span>


<span class="s">&lt;/script&gt;</span>

<span class="t">&lt;body&gt;</span>
<span class="t">&lt;ul </span><span class="at">id=</span><span class="v">"family"</span><span class="t">&gt;</span>
<span class="t">&lt;/ul&gt;</span>
<span class="t">&lt;div </span><span class="at">id=</span><span class="v">"output"</span><span class="t">&gt;&lt;/div&gt;</span>
<span class="t">&lt;/body&gt;</span>
<span class="t">&lt;/html&gt;</span>
</div>
<script>
(function(){var els=document.querySelectorAll('.fit');for(var i=0;i<els.length;i++){var e=els[i];var w=parseFloat(getComputedStyle(e).getPropertyValue('--w'));var r=document.createRange();r.selectNodeContents(e);var cw=r.getBoundingClientRect().width;if(cw>0&&w>0){e.style.transformOrigin='0 50%';e.style.transform='scaleX('+(w/cw)+')';}}})();
</script>
</body></html>
